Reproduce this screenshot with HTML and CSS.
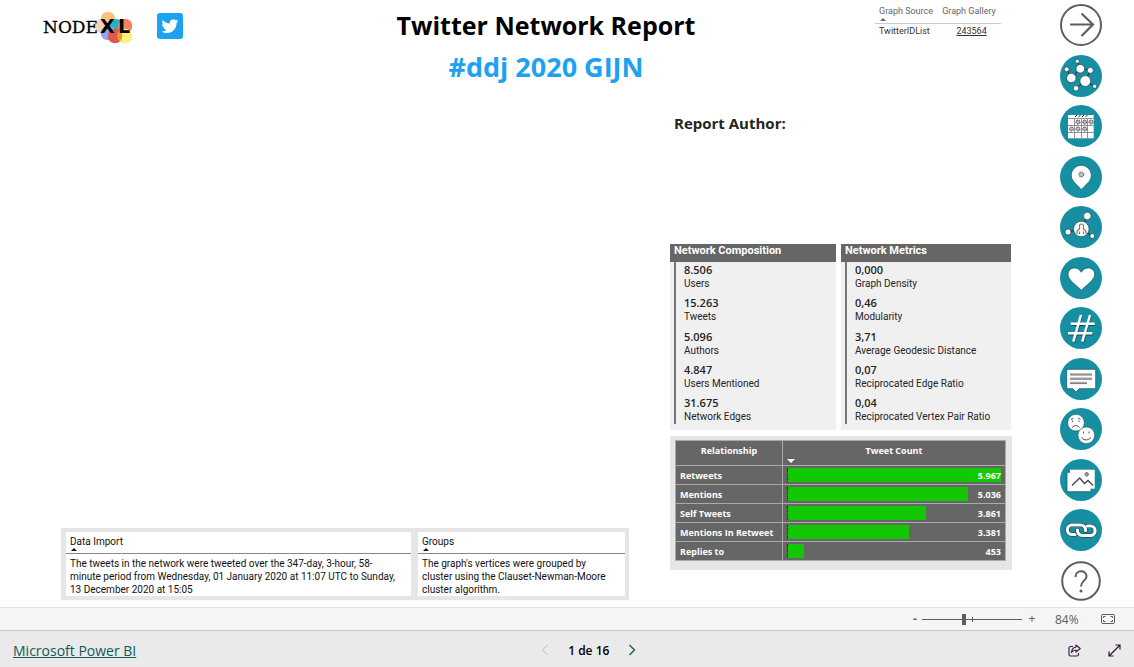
FILE: index.html
```html
<!DOCTYPE html>
<html lang="en">
<head>
<meta charset="utf-8">
<title>Twitter Network Report</title>
<link rel="stylesheet" href="styles.css">
</head>
<body>
<div class="app">
  <main class="report">
    <header class="head">
      <div class="brand">
        <svg class="logo" viewBox="0 0 91 34" role="img" aria-label="NodeXL">
          <circle cx="59" cy="15" r="7" fill="#f3d3b8"/>
          <circle cx="65" cy="8" r="7.3" fill="#ffc27d"/>
          <circle cx="73" cy="15" r="7" fill="#1cb5c4"/>
          <circle cx="82" cy="15" r="7.3" fill="#f58062"/>
          <circle cx="65" cy="22" r="7.3" fill="#8fa4fb"/>
          <circle cx="72" cy="25" r="7.3" fill="#e0584b"/>
          <circle cx="82" cy="25" r="7.3" fill="#fff07a"/>
          <path d="M77 19.700a7.300 7.300 0 0 1 0 10.600a7.300 7.300 0 0 1 0-10.600z" fill="#f0922f"/>
          <text class="logo-node" x="0" y="22">NODE</text>
          <text class="logo-xl" x="57" y="22">X</text>
          <text class="logo-xl" x="75" y="22">L</text>
        </svg>
        <svg class="bird" viewBox="0 0 26 26" role="img" aria-label="Twitter">
          <rect width="26" height="26" rx="3" fill="#1da1f2"/>
          <path transform="translate(4.500 4.700) scale(.7)" fill="#fff" d="M23.950 4.570a10 10 0 0 1-2.820.77 4.960 4.960 0 0 0 2.160-2.720c-.95.55-2 .95-3.130 1.180a4.920 4.920 0 0 0-8.380 4.480A13.930 13.930 0 0 1 1.640 3.160a4.820 4.820 0 0 0-.67 2.480c0 1.710.87 3.210 2.190 4.100a4.900 4.900 0 0 1-2.230-.62v.06a4.920 4.920 0 0 0 3.950 4.830 5 5 0 0 1-2.210.08 4.940 4.940 0 0 0 4.600 3.420A9.870 9.870 0 0 1 0 19.540a14 14 0 0 0 7.550 2.210c9.050 0 14-7.500 14-13.980 0-.21 0-.42-.02-.63a9.940 9.940 0 0 0 2.420-2.570z"/>
        </svg>
      </div>
      <div class="titles">
        <h1>Twitter Network Report</h1>
        <h2>#ddj 2020 GIJN</h2>
      </div>
      <table class="source">
        <thead><tr><th>Graph Source<i class="sort"></i></th><th>Graph Gallery<i class="sort hidden"></i></th></tr></thead>
        <tbody><tr><td>TwitterIDList</td><td class="mid"><a href="#gallery">243564</a></td></tr></tbody>
      </table>
    </header>

    <section class="notes">
      <table class="note">
        <thead><tr><th>Data Import<i class="sort"></i></th></tr></thead>
        <tbody><tr><td>The tweets in the network were tweeted over the 347-day, 3-hour, 58-minute period from Wednesday, 01 January 2020 at 11:07 UTC to Sunday, 13 December 2020 at 15:05</td></tr></tbody>
      </table>
      <table class="note">
        <thead><tr><th>Groups<i class="sort"></i></th></tr></thead>
        <tbody><tr><td>The graph's vertices were grouped by cluster using the Clauset-Newman-Moore cluster algorithm.</td></tr></tbody>
      </table>
    </section>

    <section class="stats">
      <h3 class="author">Report Author:</h3>
      <div class="cards">
        <article class="card">
          <h4>Network Composition</h4>
          <ul>
            <li><b>8.506</b><span>Users</span></li>
            <li><b>15.263</b><span>Tweets</span></li>
            <li><b>5.096</b><span>Authors</span></li>
            <li><b>4.847</b><span>Users Mentioned</span></li>
            <li><b>31.675</b><span>Network Edges</span></li>
          </ul>
        </article>
        <article class="card">
          <h4>Network Metrics</h4>
          <ul>
            <li><b>0,000</b><span>Graph Density</span></li>
            <li><b>0,46</b><span>Modularity</span></li>
            <li><b>3,71</b><span>Average Geodesic Distance</span></li>
            <li><b>0,07</b><span>Reciprocated Edge Ratio</span></li>
            <li><b>0,04</b><span>Reciprocated Vertex Pair Ratio</span></li>
          </ul>
        </article>
      </div>
      <div class="relations">
        <table class="bars">
          <thead><tr><th class="name">Relationship</th><th>Tweet Count<i class="sort down"></i></th></tr></thead>
          <tbody>
            <tr><td>Retweets</td><td class="count"><div class="track"><div class="bar" style="width:100%"></div><span>5.967</span></div></td></tr>
            <tr><td>Mentions</td><td class="count"><div class="track"><div class="bar" style="width:84.4%"></div><span>5.036</span></div></td></tr>
            <tr><td>Self Tweets</td><td class="count"><div class="track"><div class="bar" style="width:64.7%"></div><span>3.861</span></div></td></tr>
            <tr><td>Mentions In Retweet</td><td class="count"><div class="track"><div class="bar" style="width:56.7%"></div><span>3.381</span></div></td></tr>
            <tr><td>Replies to</td><td class="count"><div class="track"><div class="bar" style="width:7.6%"></div><span>453</span></div></td></tr>
          </tbody>
        </table>
      </div>
    </section>

    <nav class="rail" aria-label="Report pages">
      <button aria-label="Next page"><svg viewBox="0 0 42 42"><g fill="none" stroke="#605e5c" stroke-width="2"><circle cx="21" cy="21" r="20"/><path d="M10 20.500H33M21.500 9.500L33 20.500L21.500 32" stroke-width="2.200"/></g></svg></button>
      <button class="teal" aria-label="Network"><svg viewBox="0 0 42 42"><path d="M17.300 6.300L20.300 13.700L11.300 23L6.700 14.300M20.300 13.700L30.300 15.300L25.300 26L16 33.300M25.300 26L34.700 31.300" fill="none" stroke="#12303a"/><g fill="#fff" stroke="#12303a" stroke-width=".6"><circle cx="17.300" cy="6.300" r="2"/><circle cx="6.700" cy="14.300" r="2.400"/><circle cx="11.300" cy="23" r="4.700"/><circle cx="20.300" cy="13.700" r="4.300"/><circle cx="30.300" cy="15.300" r="3"/><circle cx="25.300" cy="26" r="5.400"/><circle cx="16" cy="33.300" r="2.700"/><circle cx="34.700" cy="31.300" r="2.100"/></g></svg></button>
      <button class="teal" aria-label="Time table"><svg viewBox="0 0 42 42"><path d="M8 10H33.700V33.300H8z" fill="#fff"/><path d="M14.500 14V33M21.500 14V33M27.500 14V33M8 13.500H33.700M8 20.500H33.700M8 27.500H33.700" stroke="#777" stroke-width=".8"/><path d="M15 12l2-2M18.500 12l2-2M22 12l2-2M25.500 12l2-2" stroke="#222" stroke-width="1"/><g fill="#bbb" stroke="#333" stroke-width="1" stroke-dasharray="1.500 .8"><circle cx="18" cy="17" r="2"/><circle cx="24.700" cy="17" r="2"/><circle cx="31" cy="17" r="2"/><circle cx="11.500" cy="24" r="2"/><circle cx="18" cy="24" r="2"/><circle cx="24.700" cy="24" r="2"/></g></svg></button>
      <button class="teal" aria-label="Locations"><svg viewBox="0 0 42 42"><path d="M21.300 33.500L13.500 25.500A10 10 0 1 1 29.100 25.500z" fill="#fff" stroke="#12505a" stroke-width=".6"/><circle cx="21.300" cy="18.500" r="2.500" fill="#bbb" stroke="#555" stroke-dasharray="1.500 .8"/></svg></button>
      <button class="teal" aria-label="Influencers"><svg viewBox="0 0 42 42"><path d="M8 26L21.300 23L27.300 10M21.300 23L32.300 30" stroke="#12303a" fill="none"/><g fill="#fff" stroke="#12303a" stroke-width=".6"><circle cx="21.300" cy="23" r="7.800"/><circle cx="27.300" cy="10" r="3.800"/><circle cx="8" cy="26" r="3"/><circle cx="32.300" cy="30" r="2.400"/></g><path d="M17 28v-3l2.500-2v-3a2 2 0 0 1 4 0v3l2.500 2v3M19.500 28v-2.500M23.500 28v-2.500" fill="none" stroke="#777" stroke-width="1.200"/></svg></button>
      <button class="teal" aria-label="Favourites"><svg viewBox="0 0 42 42"><path d="M21.300 33.200C17 28.500 8 23.500 8 17.200C8 10 18 8.500 21.300 15.300C24.600 8.500 34.700 10 34.700 17.200C34.700 23.500 25.600 28.500 21.300 33.200z" fill="#fff" stroke="#12505a" stroke-width=".7"/></svg></button>
      <button class="teal" aria-label="Hashtags"><svg viewBox="0 0 42 42"><path d="M21.500 9L14 35.500M30.500 9L23 35.500M11 17.700H35M8.500 27.300H32.800" stroke="#12505a" stroke-width="2.400"/><path d="M21 8L13.300 34.700M30 8L22.300 34.700M10.700 16.700H34.700M8 26.300H32.300" stroke="#fff" stroke-width="2.500"/></svg></button>
      <button class="teal" aria-label="Tweets"><svg viewBox="0 0 42 42"><path d="M8.200 11.300H34.200Q35.700 11.300 35.700 12.800V29.200Q35.700 30.700 34.200 30.700H19L16 34.300L13 30.700H8.200Q6.700 30.700 6.700 29.200V12.800Q6.700 11.300 8.200 11.300z" fill="#fff" stroke="#12505a" stroke-width=".7"/><path d="M10 16H32M10 20.300H32M10 24.600H27" stroke="#aaa" stroke-width="1.500"/><path d="M10 17H32M10 21.300H32M10 25.600H27" stroke="#444" stroke-width=".7"/></svg></button>
      <button class="teal" aria-label="Sentiment"><svg viewBox="0 0 42 42"><g fill="#fff" stroke="#12505a" stroke-width=".6"><circle cx="16" cy="14.700" r="8.400"/><circle cx="26.300" cy="27.300" r="8.400"/></g><g fill="none" stroke="#555"><path d="M12 19.500q4-4 7.500 0M11 11.500l2.500-1.500M18 10l2.500 1.500M12.500 12.500v1.500M19 12.500v1.500"/><path d="M21.500 29.500q4.800 5 9.500 0M23.500 23.500v2M29 23.500v2"/></g></svg></button>
      <button class="teal" aria-label="Images"><svg viewBox="0 0 42 42"><path d="M7 13.300H31V32.700H7z" fill="#fff" stroke="#12505a" stroke-width=".7"/><path d="M10 10.700H34.700V29.700H10z" fill="#fff"/><path d="M12 26.500L19.700 19L24.500 24.500L28 21.500L33 26.500" fill="none" stroke="#444" stroke-width="1.300"/><circle cx="26.700" cy="15.300" r="1.700" fill="#aaa" stroke="#444" stroke-width=".8"/></svg></button>
      <button class="teal" aria-label="Links"><svg viewBox="0 0 42 42"><g fill="none" stroke-linecap="round"><g stroke="#12303a" stroke-width="4.200"><path d="M25.500 21.500A4.800 4.800 0 0 0 21 16H11.500A4.800 4.800 0 0 0 11.500 25.500H15"/><path d="M17.500 21A5 5 0 0 0 22 26.500H31A4.800 4.800 0 0 0 31 17H27.500"/></g><g stroke="#fff" stroke-width="3.200"><path d="M25.500 21.500A4.800 4.800 0 0 0 21 16H11.500A4.800 4.800 0 0 0 11.500 25.500H15"/><path d="M17.500 21A5 5 0 0 0 22 26.500H31A4.800 4.800 0 0 0 31 17H27.500"/></g></g></svg></button>
      <button aria-label="Help"><svg viewBox="0 0 42 42"><g fill="none" stroke="#605e5c" stroke-width="2"><circle cx="21" cy="21" r="18.800"/><path d="M15.500 17C15.500 9.500 26.500 9.500 26.500 16.500C26.500 20.500 21 21 21 26.500"/></g><circle cx="21" cy="31" r="1.500" fill="#605e5c"/></svg></button>
    </nav>
  </main>

  <div class="zoombar">
    <button aria-label="Zoom out"><b>-</b></button>
    <input type="range" min="0" max="100" value="42" aria-label="Zoom">
    <button aria-label="Zoom in">+</button>
    <output>84%</output>
    <button class="fit" aria-label="Fit to page"><svg viewBox="0 0 14 10"><g fill="none" stroke="#605e5c"><rect x=".5" y=".5" width="13" height="9" rx="1"/><path d="M2.500 4V2.500H4.500M9.500 2.500H11.500V4M2.500 6V7.500H4.500M9.500 7.500H11.500V6"/></g></svg></button>
  </div>

  <footer class="foot">
    <a href="#powerbi">Microsoft Power BI</a>
    <div class="pager">
      <button aria-label="Previous page"><svg viewBox="0 0 10 12"><path d="M7.500 1L2.500 6L7.500 11" fill="none" stroke="#bbb"/></svg></button>
      <strong>1 de 16</strong>
      <button aria-label="Next page"><svg viewBox="0 0 10 12"><path d="M2.500 1L7.500 6L2.500 11" fill="none" stroke="#0f5a5c" stroke-width="1.300"/></svg></button>
    </div>
    <div class="actions">
      <button aria-label="Share"><svg viewBox="0 0 13 13"><path d="M5 2.500H2.500Q1 2.500 1 4V10.500Q1 12 2.500 12H9Q10.500 12 10.500 10.500V9M8 1L12.200 4.500L8 8V6Q5 6 3.500 8.500Q4 3.500 8 3z" fill="none" stroke="#3b2045" stroke-width="1.200" stroke-linejoin="round"/></svg></button>
      <button aria-label="Full screen"><svg viewBox="0 0 13 13"><path d="M1 12L12 1M7.500 1H12V5.500M1 7.500V12H5.500" fill="none" stroke="#2a1a30" stroke-width="1.200"/></svg></button>
    </div>
  </footer>
</div>
</body>
</html>
```
FILE: styles.css
```css
* { box-sizing: border-box; }

body {
  margin: 0;
  font-family: "Open Sans", "Noto Sans", sans-serif;
  color: #252423;
  background: #fff;
}

h1, h2, h3, h4, ul { margin: 0; padding: 0; }
ul { list-style: none; }
table { border-collapse: collapse; border-spacing: 0; }
th, td { padding: 0; text-align: left; font-weight: 400; }
svg { display: block; }
button { padding: 0; border: 0; background: none; font: inherit; color: inherit; cursor: pointer; }

.app { min-height: 100vh; display: flex; flex-direction: column; }

.report {
  flex: 1;
  display: grid;
  grid-template-columns: minmax(0, 1fr) 342px 90px;
  grid-template-rows: auto 1fr;
  padding-right: 32px;
}

.head {
  grid-column: 1 / 3;
  display: grid;
  grid-template-columns: 174px 1fr 126px;
  padding: 4px 11px 0 43px;
}
.brand { display: flex; align-items: flex-start; gap: 23px; padding-top: 7px; }
.logo { width: 91px; height: 34px; }
.logo-node { font: 17px "DejaVu Serif", serif; stroke: #000; stroke-width: .3; }
.logo-xl { font: bold 19px "DejaVu Sans", sans-serif; }
.bird { width: 26px; height: 26px; margin-top: 2px; }

.titles { text-align: center; line-height: 42px; color: #000; }
.titles h1 { font-size: 25px; font-weight: 700; }
.titles h2 { font-size: 27px; font-weight: 700; color: #1da1f2; }

.source { align-self: start; font-family: Roboto, sans-serif; font-size: 9px; line-height: 14px; color: #333; width: 100%; }
.source th { color: #666; border-bottom: 1px solid #ccc; padding-left: 4px; white-space: nowrap; }
.source td { padding-left: 4px; }
.source .mid { text-align: center; }
.source a { color: inherit; }

.sort {
  display: block;
  width: 6px;
  height: 3px;
  margin: 0 0 2px 1px;
  background: currentColor;
  clip-path: polygon(50% 0, 100% 100%, 0 100%);
}
.sort.hidden { visibility: hidden; }
.sort.down { width: 8px; height: 4px; margin: 1px 0 2px 4px; clip-path: polygon(0 0, 100% 0, 50% 100%); }

.notes {
  align-self: end;
  display: grid;
  grid-template-columns: 345fr 207fr;
  gap: 7px;
  margin: 0 41px 7px 61px;
  padding: 4px 4px 4px 5px;
  background: #e6e6e6;
}
.note { width: 100%; background: #fff; font-family: Roboto, sans-serif; font-size: 10px; line-height: 13px; color: #111; }
.note th { padding: 3px 8px 0 4px; border-bottom: 1px solid #888; }
.note td { padding: 3px 8px 0 4px; vertical-align: top; }

.stats { display: flex; flex-direction: column; padding-bottom: 37px; }
.author { flex: 1; padding: 25px 0 0 4px; font-size: 15px; line-height: 20px; font-weight: 700; }

.cards { display: grid; grid-template-columns: 166fr 170fr; gap: 5px; margin-right: 1px; }
.card { display: flex; flex-direction: column; min-height: 186px; padding-bottom: 6px; background: #f0f0f0; }
.card h4 {
  height: 18px;
  padding-left: 4px;
  background: #666;
  color: #fff;
  font: bold 11px/14px Roboto, sans-serif;
}
.card ul {
  flex: 1;
  display: flex;
  flex-direction: column;
  justify-content: space-between;
  margin-left: 4px;
  padding: 1px 0 0 8px;
  border-left: 2px solid #777;
}
.card li { line-height: 14px; }
.card b { display: block; font-size: 11px; font-weight: 600; }
.card span { display: block; font-family: Roboto, sans-serif; font-size: 10px; white-space: nowrap; }

.relations { margin-top: 6px; padding: 4px 6px 9px 5px; background: #e6e6e6; }
.bars { width: 100%; background: #666; color: #fff; font-size: 9px; }
.bars th, .bars td { border: 1px solid #aaa; font-weight: 700; }
.bars th { height: 25px; line-height: 14px; text-align: center; vertical-align: top; padding-top: 3px; }
.bars .name { width: 107px; }
.bars td { height: 19px; padding-left: 4px; line-height: 13px; }
.bars .count { padding: 0 4px; }
.track { display: grid; align-items: center; border-left: 1px dotted #222; }
.bar, .track span { grid-area: 1 / 1; }
.bar { height: 14px; background: #12c800; }
.track span { text-align: right; }

.rail {
  grid-column: 3;
  grid-row: 1 / 3;
  display: flex;
  flex-direction: column;
  justify-content: space-between;
  align-items: flex-end;
  padding: 4px 0 5px;
}
.rail button { width: 42px; height: 42px; border-radius: 50%; }
.rail .teal { background: #168fa2; }

.zoombar {
  display: flex;
  align-items: center;
  justify-content: flex-end;
  height: 23px;
  padding-right: 19px;
  border-top: 1px solid #e1e1e1;
  background: #f5f5f5;
  color: #605e5c;
  font-size: 12px;
}
.zoombar button { width: 14px; line-height: 16px; }
.zoombar input {
  appearance: none;
  width: 100px;
  height: 11px;
  margin: 0 3px 0 0;
  background:
    linear-gradient(#605e5c, #605e5c) center / 1px 5px no-repeat,
    linear-gradient(#605e5c, #605e5c) center / 100% 1px no-repeat;
}
.zoombar input::-webkit-slider-thumb { appearance: none; width: 4px; height: 11px; background: #605e5c; }
.zoombar output { width: 62px; padding-left: 16px; }
.zoombar .fit svg { width: 14px; height: 10px; }

.foot {
  display: grid;
  grid-template-columns: 109fr auto 100fr;
  align-items: center;
  height: 37px;
  padding: 2px 13px 0;
  border-top: 1px solid #c8c8c8;
  background: #eaeaea;
  font-size: 14px;
}
.foot a { color: #0f5a5c; }
.pager { display: flex; align-items: center; gap: 18px; }
.pager strong { font-size: 12px; font-weight: 600; color: #000; }
.pager svg { width: 10px; height: 12px; }
.actions { display: flex; justify-content: flex-end; gap: 27px; }
.actions svg { width: 13px; height: 13px; }
```
